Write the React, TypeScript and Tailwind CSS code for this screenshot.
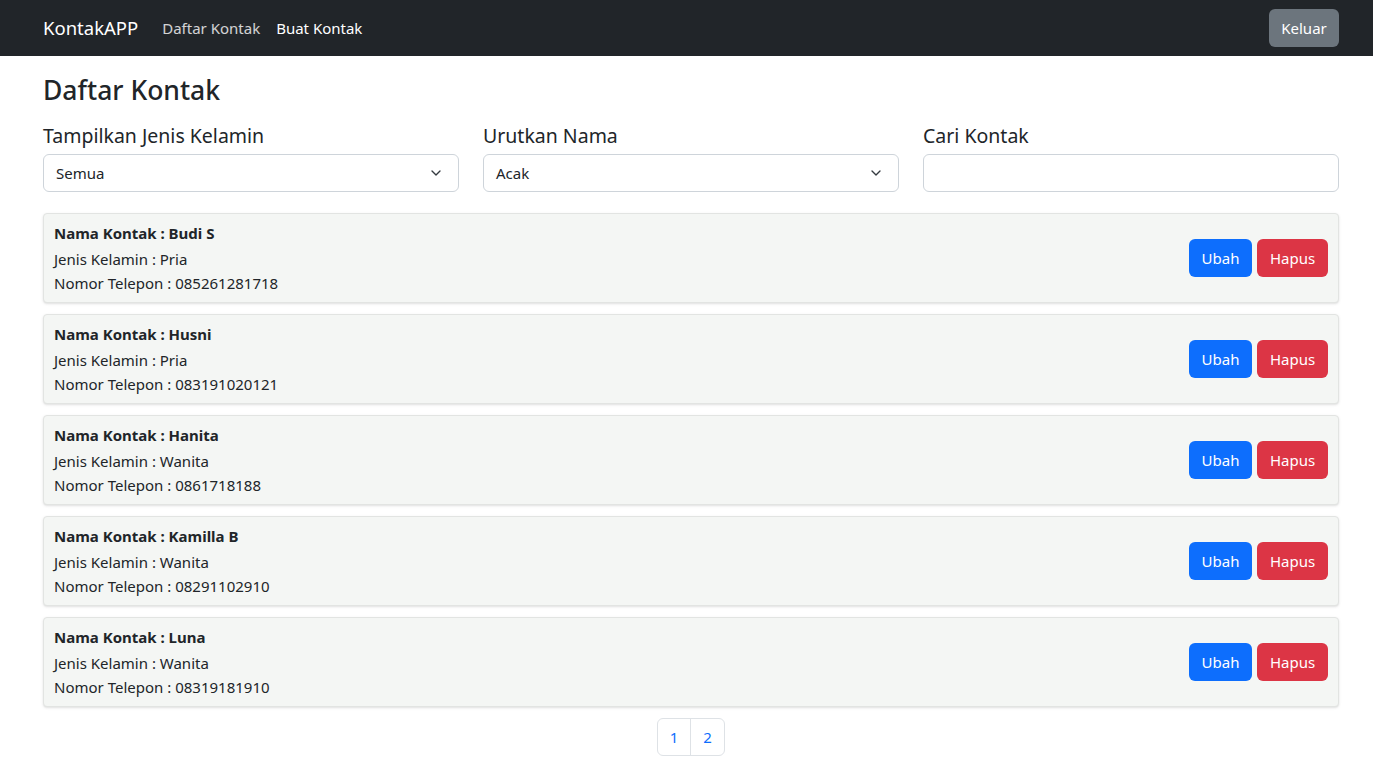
import { ChevronDown } from "lucide-react";

interface Kontak {
  nama: string;
  jenisKelamin: string;
  telepon: string;
}

const kontakList: Kontak[] = [
  { nama: "Budi S", jenisKelamin: "Pria", telepon: "085261281718" },
  { nama: "Husni", jenisKelamin: "Pria", telepon: "083191020121" },
  { nama: "Hanita", jenisKelamin: "Wanita", telepon: "0861718188" },
  { nama: "Kamilla B", jenisKelamin: "Wanita", telepon: "08291102910" },
  { nama: "Luna", jenisKelamin: "Wanita", telepon: "08319181910" },
];

export default function App() {
  return (
    <div
      className="min-h-screen bg-white text-[#212529]"
      style={{ fontFamily: '"Noto Sans", "Open Sans", sans-serif' }}
    >
      {/* Navbar */}
      <nav className="h-14 bg-[#212529] flex items-center pl-[43px] pr-[34px]">
        <span className="text-white text-[18.5px] mr-[24px]">KontakAPP</span>
        <a className="text-white/80 text-[15px] mr-[16px]">Daftar Kontak</a>
        <a className="text-white text-[15px]">Buat Kontak</a>
        <button className="ml-auto h-[38px] w-[70px] rounded-md bg-[#6c757d] text-white text-[15px]">
          Keluar
        </button>
      </nav>

      <main className="pl-[43px] pr-[34px] pt-[19px]">
        <h3 className="text-[26.5px] font-medium leading-[1.2] mb-[17px]">Daftar Kontak</h3>

        <div className="grid grid-cols-3 gap-6 mb-[21px]">
          <Field label="Tampilkan Jenis Kelamin">
            <SelectBox value="Semua" />
          </Field>
          <Field label="Urutkan Nama">
            <SelectBox value="Acak" />
          </Field>
          <Field label="Cari Kontak">
            <input className="w-full h-[38px] rounded-md border border-[#ced4da] px-3 outline-none" />
          </Field>
        </div>

        <div className="flex flex-col gap-[11px]">
          {kontakList.map((k) => (
            <div
              key={k.nama}
              className="flex items-center bg-[#f4f6f4] border border-[#e2e4e2] rounded shadow-sm px-[10px] py-[7px]"
            >
              <div className="flex-1 text-[15px] leading-[24px]">
                <div className="font-bold mb-[2px]">Nama Kontak : {k.nama}</div>
                <div>Jenis Kelamin : {k.jenisKelamin}</div>
                <div>Nomor Telepon : {k.telepon}</div>
              </div>
              <div className="flex gap-[5px]">
                <button className="h-[38px] w-[63px] rounded-md bg-[#0d6efd] text-white text-[15px]">
                  Ubah
                </button>
                <button className="h-[38px] w-[71px] rounded-md bg-[#dc3545] text-white text-[15px]">
                  Hapus
                </button>
              </div>
            </div>
          ))}
        </div>

        <div className="flex justify-center mt-[11px]">
          <div className="flex border border-[#dee2e6] rounded-md text-[#0d6efd] text-[15px]">
            <span className="h-[36px] w-[33px] flex items-center justify-center border-r border-[#dee2e6]">
              1
            </span>
            <span className="h-[36px] w-[33px] flex items-center justify-center">2</span>
          </div>
        </div>
      </main>
    </div>
  );
}

function Field({ label, children }: { label: string; children: React.ReactNode }) {
  return (
    <div>
      <label className="block text-[19.5px] leading-[1.2] mb-[7px]">{label}</label>
      {children}
    </div>
  );
}

function SelectBox({ value }: { value: string }) {
  return (
    <div className="h-[38px] rounded-md border border-[#ced4da] pl-3 pr-[14px] flex items-center justify-between text-[15px]">
      <span>{value}</span>
      <ChevronDown size={16} strokeWidth={2} className="text-[#343a40]" />
    </div>
  );
}
